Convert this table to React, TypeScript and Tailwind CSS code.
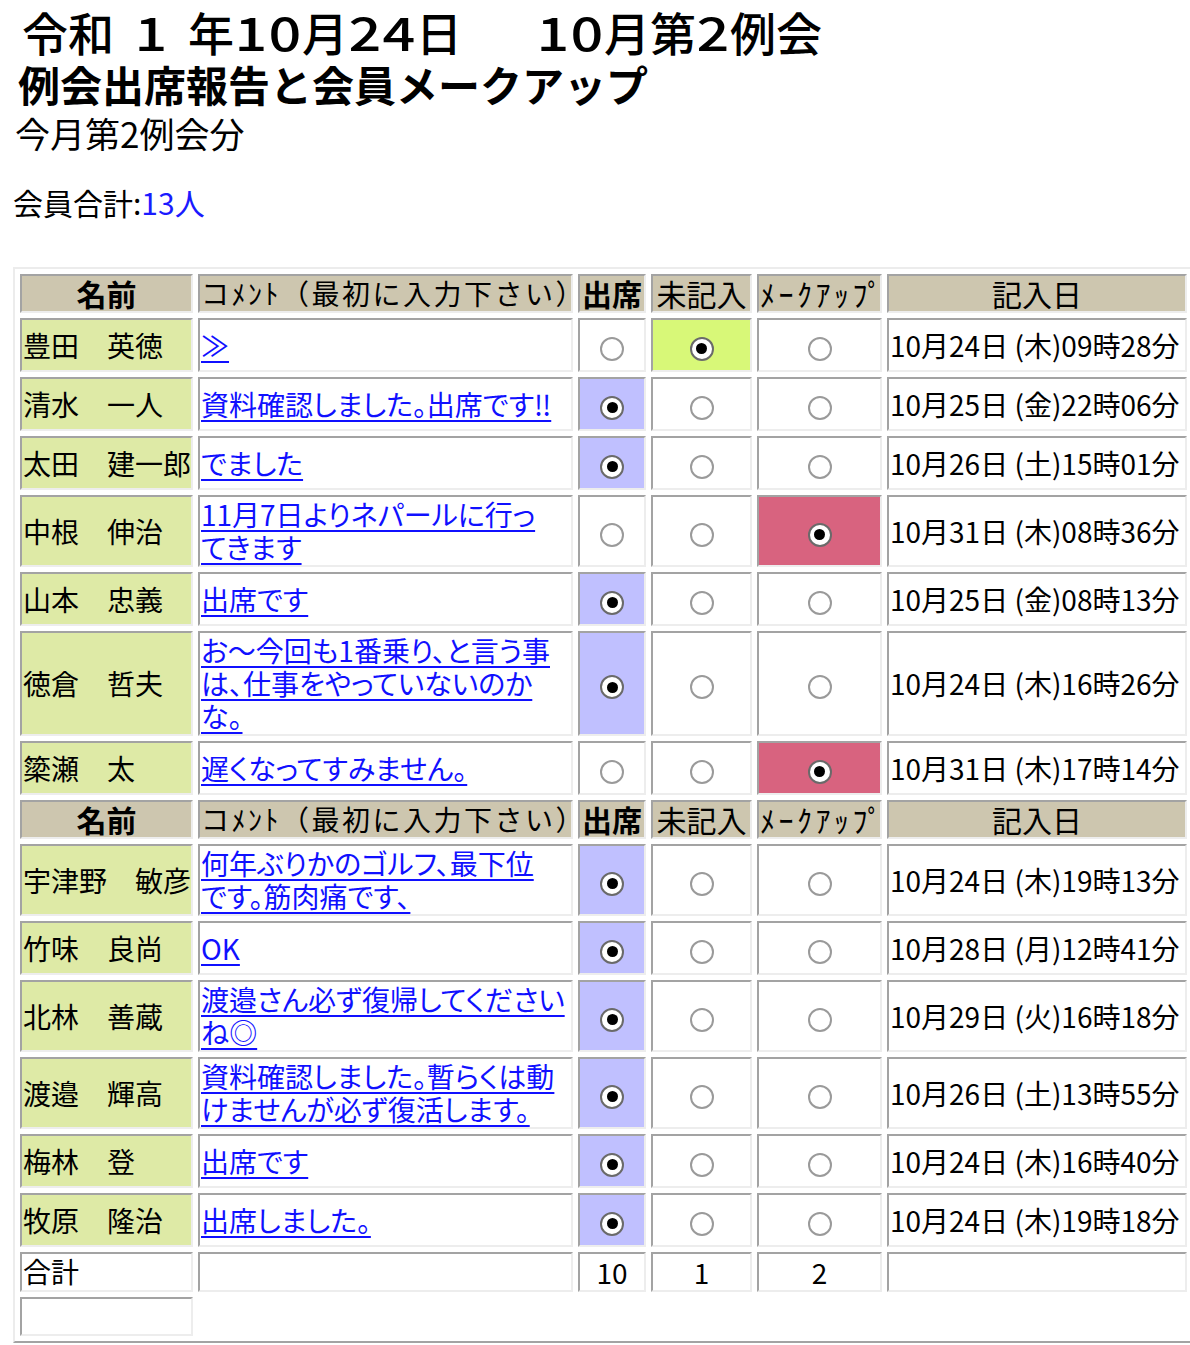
import React from "react";

type Row = { name: string; lines: string[]; st: 0 | 1 | 2; date: string };

const top: Row[] = [
  { name: "豊田　英徳", lines: ["≫"], st: 1, date: "10月24日 (木)09時28分" },
  { name: "清水　一人", lines: ["資料確認しました。出席です‼"], st: 0, date: "10月25日 (金)22時06分" },
  { name: "太田　建一郎", lines: ["でました"], st: 0, date: "10月26日 (土)15時01分" },
  { name: "中根　伸治", lines: ["11月7日よりネパールに行っ", "てきます"], st: 2, date: "10月31日 (木)08時36分" },
  { name: "山本　忠義", lines: ["出席です"], st: 0, date: "10月25日 (金)08時13分" },
  { name: "徳倉　哲夫", lines: ["お〜今回も1番乗り、と言う事", "は、仕事をやっていないのか", "な。"], st: 0, date: "10月24日 (木)16時26分" },
  { name: "簗瀬　太", lines: ["遅くなってすみません。"], st: 2, date: "10月31日 (木)17時14分" },
];

const bottom: Row[] = [
  { name: "宇津野　敏彦", lines: ["何年ぶりかのゴルフ、最下位", "です。筋肉痛です、"], st: 0, date: "10月24日 (木)19時13分" },
  { name: "竹味　良尚", lines: ["OK"], st: 0, date: "10月28日 (月)12時41分" },
  { name: "北林　善蔵", lines: ["渡邉さん必ず復帰してください", "ね◎"], st: 0, date: "10月29日 (火)16時18分" },
  { name: "渡邉　輝高", lines: ["資料確認しました。暫らくは動", "けませんが必ず復活します。"], st: 0, date: "10月26日 (土)13時55分" },
  { name: "梅林　登", lines: ["出席です"], st: 0, date: "10月24日 (木)16時40分" },
  { name: "牧原　隆治", lines: ["出席しました。"], st: 0, date: "10月24日 (木)19時18分" },
];

const cell =
  "border-2 border-t-[#a3a3a3] border-l-[#a3a3a3] border-r-[#ededed] border-b-[#ededed] px-[1px] py-[1px] align-middle";

// wide title digits
function Num({ v }: { v: string }) {
  return (
    <>
      {v.split("").map((d, i) => (
        <span key={i} className="inline-block w-[34px] text-center scale-x-125">
          {d}
        </span>
      ))}
    </>
  );
}

function Radio({ on }: { on: boolean }) {
  return (
    <span
      className={`inline-flex w-[24px] h-[24px] rounded-full border-2 bg-white items-center justify-center align-middle ${
        on ? "border-[#6a6a6a]" : "border-[#9a9a9a]"
      }`}
    >
      {on && <span className="w-[11px] h-[11px] rounded-full bg-black" />}
    </span>
  );
}

function Head() {
  return (
    <tr className="h-[39px] text-[30px] leading-[33px] bg-[#cdc6af] text-black">
      <td className={`${cell} bg-[#cdc6af] text-center font-bold`}>名前</td>
      <td className={`${cell} bg-[#cdc6af] whitespace-nowrap text-[28px] tracking-[2.5px]`}>コﾒﾝﾄ（最初に入力下さい）</td>
      <td className={`${cell} bg-[#cdc6af] text-center font-bold whitespace-nowrap`}>出席</td>
      <td className={`${cell} bg-[#cdc6af] text-center whitespace-nowrap`}>未記入</td>
      <td className={`${cell} bg-[#cdc6af] text-center whitespace-nowrap tracking-[3.5px]`}>ﾒｰｸｱｯﾌﾟ</td>
      <td className={`${cell} bg-[#cdc6af] text-center`}>記入日</td>
    </tr>
  );
}

function Member({ r }: { r: Row }) {
  return (
    <tr className="h-[54px]">
      <td className={`${cell} bg-[#deeaa6] whitespace-nowrap`}>{r.name}</td>
      <td className={`${cell} bg-white whitespace-nowrap [font-feature-settings:'palt']`}>
        <a href="#" className="text-[#1010ff] underline decoration-2 underline-offset-[4px]">
          {r.lines.map((l, i) => (
            <React.Fragment key={i}>
              {i > 0 && <br />}
              {l}
            </React.Fragment>
          ))}
        </a>
      </td>
      <td className={`${cell} text-center ${r.st === 0 ? "bg-[#c0c0ff]" : "bg-white"}`}>
        <Radio on={r.st === 0} />
      </td>
      <td className={`${cell} text-center ${r.st === 1 ? "bg-[#d8f878]" : "bg-white"}`}>
        <Radio on={r.st === 1} />
      </td>
      <td className={`${cell} text-center ${r.st === 2 ? "bg-[#d8637f]" : "bg-white"}`}>
        <Radio on={r.st === 2} />
      </td>
      <td className={`${cell} bg-white whitespace-nowrap`}>{r.date}</td>
    </tr>
  );
}

export default function App() {
  return (
    <div className="w-[1190px] overflow-hidden bg-white text-black font-['Noto_Sans_CJK_JP','Noto_Sans',sans-serif]">
      <div className="pl-[13px]">
        <div className="h-[58px] pt-[4px] pl-[9px] text-[46px] leading-[54px] font-medium whitespace-nowrap">
          令和<span className="inline-block w-[20px]" />
          <Num v="1" />
          <span className="inline-block w-[20px]" />年<Num v="10" />月<Num v="24" />日
          <span className="inline-block w-[74px]" />
          <Num v="10" />月第<Num v="2" />例会
        </div>
        <div className="h-[52px] pl-[5px] text-[42px] leading-[52px] font-bold whitespace-nowrap">
          例会出席報告と会員メークアップ
        </div>
        <div className="h-[45px] pl-[2px] text-[35px] leading-[45px] whitespace-nowrap">今月第2例会分</div>
        <div className="h-[25px]" />
        <div className="h-[45px] text-[30px] leading-[45px] whitespace-nowrap">
          会員合計:<span className="text-[#1a1aff]">13人</span>
        </div>
        <div className="h-[42px]" />
        <table className="table-fixed border-separate border-spacing-[5px] border-2 border-t-[#ececec] border-l-[#ececec] border-r-[#a3a3a3] border-b-[#a3a3a3] text-[28px] leading-[33px] w-[1181px]">
          <colgroup>
            <col className="w-[173px]" />
            <col className="w-[375px]" />
            <col className="w-[68px]" />
            <col className="w-[101px]" />
            <col className="w-[125px]" />
            <col className="w-[300px]" />
          </colgroup>
          <tbody>
            <Head />
            {top.map((r, i) => (
              <Member key={i} r={r} />
            ))}
            <Head />
            {bottom.map((r, i) => (
              <Member key={i} r={r} />
            ))}
            <tr className="h-[40px]">
              <td className={`${cell} bg-white align-top`}>合計</td>
              <td className={`${cell} bg-white`} />
              <td className={`${cell} bg-white text-center`}>10</td>
              <td className={`${cell} bg-white text-center`}>1</td>
              <td className={`${cell} bg-white text-center`}>2</td>
              <td className={`${cell} bg-white`} />
            </tr>
            <tr className="h-[39px]">
              <td className={`${cell} bg-white`} />
            </tr>
          </tbody>
        </table>
      </div>
    </div>
  );
}
